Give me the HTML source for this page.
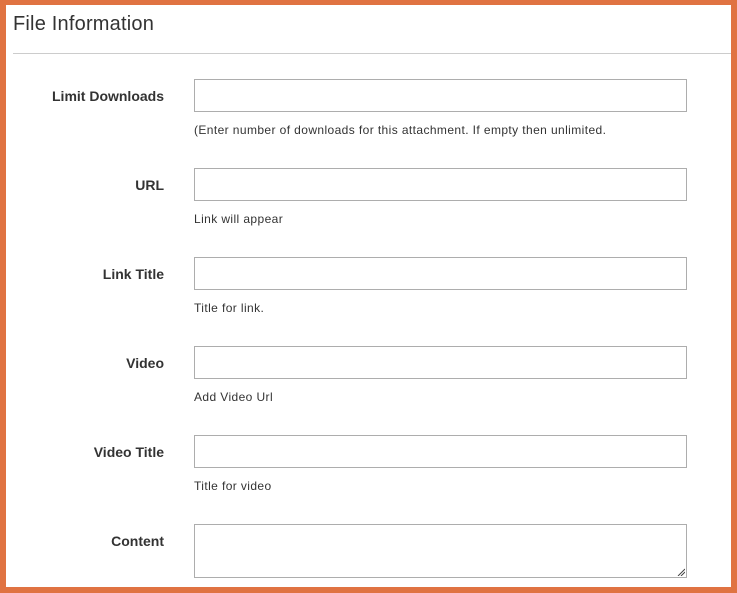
<!DOCTYPE html><html><head><style>
body{margin:0;width:737px;height:593px;background:#e07342;position:relative;overflow:hidden;font-family:"Liberation Sans",sans-serif}
.p{position:absolute;left:6px;top:5px;right:6px;bottom:6px;background:#fff}
h1{position:absolute;left:7px;top:8px;margin:0;font-weight:normal;font-size:20px;color:#333;letter-spacing:0.2px}
.hr{position:absolute;left:7px;right:0;top:48px;border-top:1px solid #ccc}
.l{position:absolute;right:567px;font-weight:bold;font-size:14px;color:#333;text-align:right}
.i{position:absolute;left:188px;width:491px;height:31px;border:1px solid #adadad;background:#fff}
.n{position:absolute;left:188px;font-size:12px;color:#333;letter-spacing:0.4px}
</style></head><body><div class="p">
<h1>File Information</h1><div class="hr"></div>
<div class="l" style="top:83px">Limit Downloads</div><div class="i" style="top:74px"></div><div class="n" style="top:118px">(Enter number of downloads for this attachment. If empty then unlimited.</div>
<div class="l" style="top:172px">URL</div><div class="i" style="top:163px"></div><div class="n" style="top:207px">Link will appear</div>
<div class="l" style="top:261px">Link Title</div><div class="i" style="top:252px"></div><div class="n" style="top:296px">Title for link.</div>
<div class="l" style="top:350px">Video</div><div class="i" style="top:341px"></div><div class="n" style="top:385px">Add Video Url</div>
<div class="l" style="top:439px">Video Title</div><div class="i" style="top:430px"></div><div class="n" style="top:474px">Title for video</div>
<div class="l" style="top:528px">Content</div><div class="i" style="top:519px;height:52px"><svg style="position:absolute;right:1px;bottom:1px" width="8" height="8"><path d="M1 8L8 1M4 8L8 4" stroke="#444" stroke-width="1"/></svg></div>
</div></body></html>
